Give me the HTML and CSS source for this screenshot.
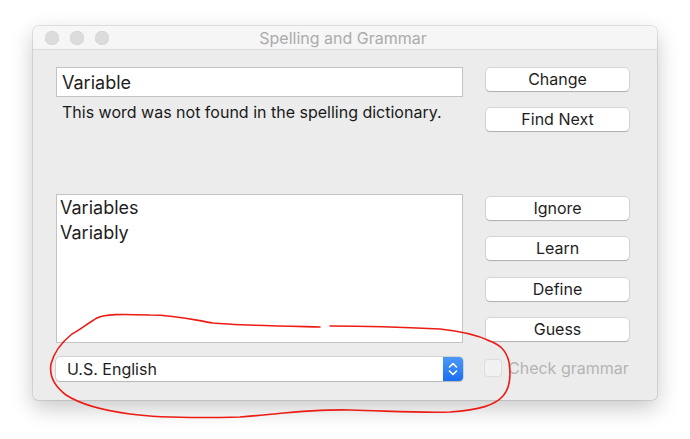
FILE: index.html
```html
<!DOCTYPE html>
<html>
<head>
<meta charset="utf-8">
<link rel="stylesheet" href="styles.css">
</head>
<body>
<div class="window">
  <div class="titlebar">
    <div class="lights"><span class="light"></span><span class="light"></span><span class="light"></span></div>
    <div class="title">Spelling and Grammar</div>
  </div>
  <div class="content">
    <div class="left">
      <div class="field">Variable</div>
      <div class="message">This word was not found in the spelling dictionary.</div>
      <div class="list">
        <div class="item">Variables</div>
        <div class="item">Variably</div>
      </div>
      <div class="popup">
        <span class="popup-label">U.S. English</span>
        <span class="stepper">
          <svg width="10" height="16" viewBox="0 0 10 16"><path d="M1.5 6 L5 2.5 L8.5 6 M1.5 10 L5 13.5 L8.5 10" fill="none" stroke="#fff" stroke-width="1.6" stroke-linecap="round" stroke-linejoin="round"/></svg>
        </span>
      </div>
    </div>
    <div class="right">
      <div class="btn b-change">Change</div>
      <div class="btn b-next">Find Next</div>
      <div class="btn b-ignore">Ignore</div>
      <div class="btn b-learn">Learn</div>
      <div class="btn b-define">Define</div>
      <div class="btn b-guess">Guess</div>
      <div class="check-row"><span class="checkbox"></span><span class="check-label">Check grammar</span></div>
    </div>
  </div>
</div>
<svg class="annot" width="690" height="439" viewBox="0 0 690 439">
  <path d="M320 327 C 280 326, 230 325, 213 323 C 190 319, 175 315, 150 315 C 120 314, 105 314, 97 318 C 88 323, 80 330, 72 334 C 62 342, 54 352, 51 364 C 49 376, 54 386, 66 395 C 80 404, 100 410, 130 414 C 160 418, 200 418, 240 417 C 280 414, 310 409, 350 410 C 390 411, 420 413, 450 412 C 480 410, 495 405, 503 396 C 510 388, 511 375, 509 362 C 506 350, 500 345, 490 341 C 475 334, 460 331, 440 329 C 400 327, 360 326, 330 326" fill="none" stroke="#ec1c14" stroke-width="1.6" stroke-linecap="round"/>
</svg>
</body>
</html>
```
FILE: styles.css
```css
html, body {
  margin: 0;
  padding: 0;
  background: #ffffff;
  width: 690px;
  height: 439px;
  overflow: hidden;
  font-family: "Inter", "Roboto", "Liberation Sans", sans-serif;
  color: #1e1e1e;
}
.window {
  margin: 26px 0 0 33px;
  width: 624px;
  height: 374px;
  background: #ececec;
  border-radius: 5px;
  box-shadow: 0 0 0 0.5px rgba(0,0,0,0.18), 0 8px 22px rgba(0,0,0,0.22);
  display: flex;
  flex-direction: column;
  box-sizing: border-box;
}
.titlebar {
  height: 23px;
  background: #f6f6f6;
  border-bottom: 1px solid #dadada;
  border-radius: 5px 5px 0 0;
  display: flex;
  align-items: center;
  position: relative;
}
.lights {
  display: flex;
  gap: 11px;
  padding-left: 12px;
  padding-top: 1px;
}
.light {
  width: 14px;
  height: 14px;
  border-radius: 50%;
  background: #dcdcdc;
  box-shadow: inset 0 0 0 0.5px #d0d0d0;
}
.title {
  flex: 1;
  text-align: center;
  margin-right: 80px;
  font-size: 16px;
  color: #ababab;
  padding-top: 1px;
  white-space: nowrap;
}
.content {
  display: flex;
  padding: 0 28px 0 23px;
  gap: 23px;
}
.left {
  width: 407px;
  display: flex;
  flex-direction: column;
}
.field {
  margin-top: 17px;
  height: 30px;
  box-sizing: border-box;
  background: #fff;
  border: 1px solid #c3c3c3;
  font-size: 18px;
  line-height: 30px;
  padding-left: 5px;
}
.message {
  margin-top: 6px;
  font-size: 16px;
  line-height: 19px;
  padding-left: 6px;
  color: #1a1a1a;
  white-space: nowrap;
}
.list {
  margin-top: 72px;
  height: 149px;
  box-sizing: border-box;
  background: #fff;
  border: 1px solid #c3c3c3;
  padding: 0 0 0 3px;
}
.item {
  font-size: 18px;
  line-height: 25px;
}
.popup {
  margin-top: 14px;
  height: 24px;
  box-sizing: border-box;
  background: #fff;
  border-radius: 4px;
  box-shadow: 0 0 0 0.5px rgba(0,0,0,0.22), 0 1px 1px rgba(0,0,0,0.12);
  display: flex;
  align-items: center;
  overflow: hidden;
}
.popup-label {
  flex: 1;
  font-size: 16px;
  padding-left: 11px;
  color: #1e1e1e;
}
.stepper {
  width: 20px;
  height: 24px;
  background: linear-gradient(#4c98f8, #1b6ff0);
  display: flex;
  align-items: center;
  justify-content: center;
}
.right {
  width: 143px;
  display: flex;
  flex-direction: column;
}
.btn {
  height: 23px;
  box-sizing: border-box;
  background: #fff;
  border-radius: 4px;
  box-shadow: 0 0 0 0.5px rgba(0,0,0,0.2), 0 1px 1px rgba(0,0,0,0.18);
  text-align: center;
  font-size: 16px;
  line-height: 23px;
  color: #1e1e1e;
}
.b-change { margin-top: 18px; }
.b-next { margin-top: 17px; }
.b-ignore { margin-top: 66px; }
.b-learn { margin-top: 17px; }
.b-define { margin-top: 18px; }
.b-guess { margin-top: 17px; }
.check-row {
  margin-top: 17px;
  display: flex;
  align-items: center;
  gap: 7px;
  margin-left: -1px;
  white-space: nowrap;
}
.checkbox {
  flex: none;
  width: 16px;
  height: 16px;
  border-radius: 3px;
  background: #f1f1f1;
  box-shadow: 0 0 0 1px #dcdcdc;
}
.check-label {
  font-size: 16px;
  color: #b4b4b4;
}
.annot {
  position: absolute;
  left: 0;
  top: 0;
  pointer-events: none;
}
```
